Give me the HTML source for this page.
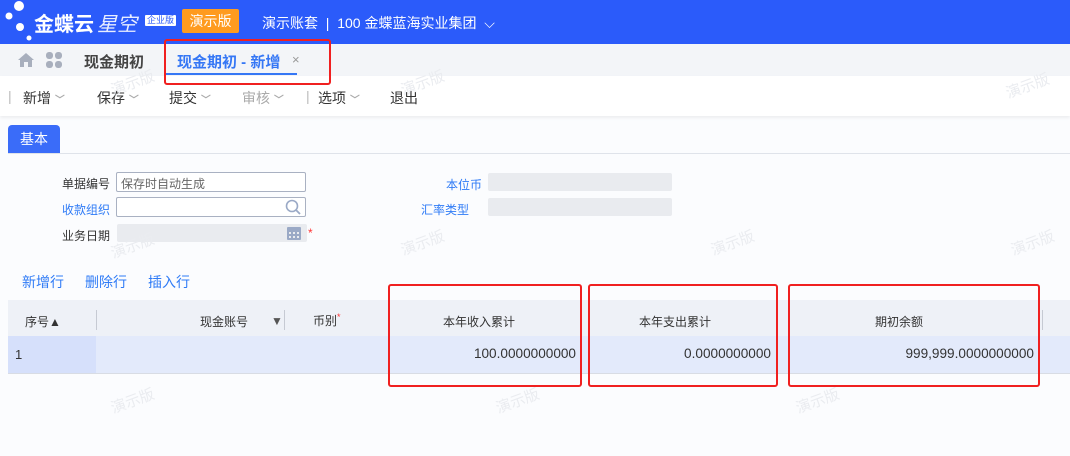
<!DOCTYPE html>
<html><head><meta charset="utf-8">
<style>
*{margin:0;padding:0;box-sizing:border-box}
body{width:1070px;height:456px;overflow:hidden;position:relative;background:#fbfcfe;font-family:"Liberation Sans","Noto Sans CJK SC",sans-serif;font-size:13px;color:#333}
.abs{position:absolute}
.hdr{left:0;top:0;width:1070px;height:44px;background:#2b5bfa;color:#fff}
.tabs{left:0;top:44px;width:1070px;height:32px;background:#f3f5f8}
.tb{left:0;top:76px;width:1070px;height:40px;background:#fff;box-shadow:0 2px 3px rgba(0,0,0,.06)}
.tb span{position:absolute;top:12px;font-size:14px;color:#333}
.chev{color:#aaa;font-size:10px}
.lbl{font-size:12px;color:#333}
.blue{color:#2f7bf6}
.inp{border:1px solid #a9b1c2;border-radius:2px;background:#fff;height:20px}
.gray{background:#e9ebef;border-radius:2px;height:18px}
.red{border:2px solid #f02020;border-radius:3px}
.wm{color:#eaecf0;font-size:15px;transform:rotate(-20deg)}
.th{top:300px;height:36px;background:#eef1f7}
.td{top:336px;height:37px;background:#e3eafb}
.c{font-size:12px;color:#333}
.num{font-size:13.6px;color:#333;text-align:right;top:346px}
.sep{width:1px;height:20px;background:#c6cad3;top:310px}
</style></head><body>
<div class="abs hdr">
  <svg class="abs" style="left:0;top:0" width="34" height="44"><circle cx="19" cy="6" r="5" fill="#fff"/><circle cx="9" cy="16" r="3.5" fill="#fff"/><circle cx="20" cy="27" r="4" fill="#fff"/><circle cx="29" cy="38" r="2.5" fill="#fff"/></svg>
  <span class="abs" style="left:34px;top:8px;font-size:20px;font-weight:bold">金蝶云</span>
  <span class="abs" style="left:97px;top:8px;font-size:20px;font-style:italic;color:#e8eeff">星空</span>
  <span class="abs" style="left:145px;top:15px;font-size:9px;background:#fff;color:#2b5bfa;padding:0 2px;line-height:11px;border-radius:1px">企业版</span>
  <span class="abs" style="left:182px;top:9px;width:57px;height:24px;background:#ff9b1f;border-radius:2px;text-align:center;line-height:24px;font-size:14px">演示版</span>
  <span class="abs" style="left:262px;top:13px;font-size:14px">演示账套 &nbsp;|&nbsp; 100 金蝶蓝海实业集团 &nbsp;⌵</span>
</div>
<div class="abs tabs">
  <svg class="abs" style="left:18px;top:9px" width="16" height="14"><path d="M8 0L0 7h2v7h4V9h4v5h4V7h2z" fill="#a8afbd"/></svg>
  <svg class="abs" style="left:46px;top:8px" width="16" height="16" fill="#a8afbd"><rect x="0" y="0" width="7" height="7" rx="3"/><rect x="9" y="0" width="7" height="7" rx="3"/><rect x="0" y="9" width="7" height="7" rx="3"/><rect x="9" y="9" width="7" height="7" rx="3"/></svg>
  <span class="abs" style="left:84px;top:7px;font-size:15px;font-weight:bold;color:#444">现金期初</span>
  <span class="abs" style="left:177px;top:7px;font-size:15px;font-weight:bold;color:#3577f5">现金期初 - 新增</span>
  <span class="abs" style="left:292px;top:8px;font-size:13px;color:#999">×</span>
  <div class="abs" style="left:164px;top:29px;width:133px;height:2px;background:#3577f5"></div>
</div>
<div class="abs tb">
  <span style="left:8px;color:#bbb">|</span>
  <span style="left:23px">新增 <b class="chev">﹀</b></span>
  <span style="left:97px">保存 <b class="chev">﹀</b></span>
  <span style="left:169px">提交 <b class="chev">﹀</b></span>
  <span style="left:242px;color:#aaa">审核 <b class="chev">﹀</b></span>
  <span style="left:306px;color:#bbb">|</span>
  <span style="left:318px">选项 <b class="chev">﹀</b></span>
  <span style="left:390px">退出</span>
</div>
<div class="abs" style="left:8px;top:125px;width:52px;height:28px;background:#3a6cf9;border-radius:4px 4px 0 0;color:#fff;font-size:14px;text-align:center;line-height:28px">基本</div>
<div class="abs" style="left:8px;top:153px;width:1062px;height:1px;background:#dfe3ea"></div>

<span class="abs lbl" style="left:62px;top:175px">单据编号</span>
<div class="abs inp" style="left:116px;top:172px;width:190px"><span style="font-size:12px;color:#666;position:absolute;left:4px;top:2px">保存时自动生成</span></div>
<span class="abs lbl blue" style="left:62px;top:201px">收款组织</span>
<div class="abs inp" style="left:116px;top:197px;width:190px"><svg style="position:absolute;right:4px;top:1px" width="16" height="16"><circle cx="7" cy="7" r="5.5" fill="none" stroke="#9aa9c6" stroke-width="1.6"/><path d="M11 11l4 4" stroke="#9aa9c6" stroke-width="1.8"/></svg></div>
<span class="abs lbl" style="left:62px;top:227px">业务日期</span>
<div class="abs gray" style="left:117px;top:224px;width:190px"><svg style="position:absolute;right:6px;top:2px" width="14" height="14" fill="#9aa9c6"><rect x="0" y="1" width="14" height="13" rx="1"/><rect x="2" y="6" width="2" height="2" fill="#e9ebef"/><rect x="6" y="6" width="2" height="2" fill="#e9ebef"/><rect x="10" y="6" width="2" height="2" fill="#e9ebef"/><rect x="2" y="10" width="2" height="2" fill="#e9ebef"/><rect x="6" y="10" width="2" height="2" fill="#e9ebef"/><rect x="10" y="10" width="2" height="2" fill="#e9ebef"/></svg></div>
<span class="abs" style="left:308px;top:226px;color:#f33;font-size:12px">*</span>
<span class="abs lbl blue" style="left:446px;top:176px">本位币</span>
<div class="abs gray" style="left:488px;top:173px;width:184px"></div>
<span class="abs lbl blue" style="left:421px;top:201px">汇率类型</span>
<div class="abs gray" style="left:488px;top:198px;width:184px"></div>

<span class="abs blue" style="left:22px;top:272px;font-size:14px">新增行</span>
<span class="abs blue" style="left:85px;top:272px;font-size:14px">删除行</span>
<span class="abs blue" style="left:148px;top:272px;font-size:14px">插入行</span>

<div class="abs th" style="left:8px;width:1062px"></div>
<div class="abs td" style="left:8px;width:1062px"></div>
<div class="abs" style="left:8px;top:336px;width:88px;height:37px;background:#d6e0fb"></div>
<div class="abs" style="left:8px;top:373px;width:1062px;height:1px;background:#d8dce4"></div>
<span class="abs c" style="left:25px;top:313px">序号▲</span>
<div class="abs sep" style="left:96px"></div>
<span class="abs c" style="left:200px;top:313px">现金账号</span>
<span class="abs" style="left:271px;top:314px;font-size:12px;color:#555">▼</span>
<div class="abs sep" style="left:284px"></div>
<span class="abs c" style="left:313px;top:312px">币别<sup style="color:#f33;font-size:9px">*</sup></span>
<span class="abs c" style="left:443px;top:313px">本年收入累计</span>
<span class="abs c" style="left:639px;top:313px">本年支出累计</span>
<span class="abs c" style="left:875px;top:313px">期初余额</span>
<div class="abs sep" style="left:1042px"></div>
<span class="abs c" style="left:15px;top:347px;font-size:13px">1</span>
<div class="abs num" style="left:400px;width:176px">100.0000000000</div>
<div class="abs num" style="left:600px;width:171px">0.0000000000</div>
<div class="abs num" style="left:800px;width:234px">999,999.0000000000</div>

<span class="abs wm" style="left:110px;top:72px">演示版</span>
<span class="abs wm" style="left:400px;top:72px">演示版</span>
<span class="abs wm" style="left:1005px;top:75px">演示版</span>
<span class="abs wm" style="left:400px;top:232px">演示版</span>
<span class="abs wm" style="left:710px;top:232px">演示版</span>
<span class="abs wm" style="left:1010px;top:232px">演示版</span>
<span class="abs wm" style="left:110px;top:235px">演示版</span>
<span class="abs wm" style="left:110px;top:390px">演示版</span>
<span class="abs wm" style="left:495px;top:390px">演示版</span>
<span class="abs wm" style="left:795px;top:390px">演示版</span>

<div class="abs red" style="left:164px;top:39px;width:167px;height:46px"></div>
<div class="abs red" style="left:388px;top:284px;width:194px;height:103px"></div>
<div class="abs red" style="left:588px;top:284px;width:190px;height:103px"></div>
<div class="abs red" style="left:788px;top:284px;width:252px;height:103px"></div>
</body></html>
